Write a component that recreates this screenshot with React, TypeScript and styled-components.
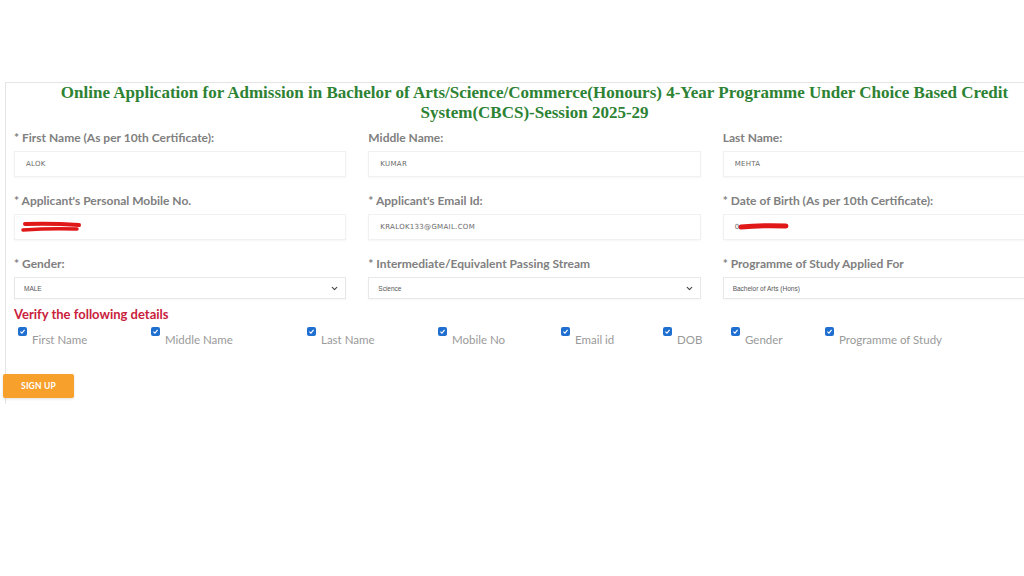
import styled, { createGlobalStyle } from 'styled-components'
import { ChevronDown } from 'lucide-react'

const GlobalStyle = createGlobalStyle`
  body {
    margin: 0;
    background: #fff;
    font-family: 'Lato', 'Open Sans', sans-serif;
  }
  * { box-sizing: border-box; }
`

const Page = styled.div`
  width: 1024px;
  height: 576px;
  overflow: hidden;
  padding: 82px 0 0 5px;
`

const Card = styled.section`
  width: 1058px;
  border: 1px solid #e4e4e4;
  border-right: none;
  border-bottom: none;
  padding: 0 8px 6px;
`

const Title = styled.h2`
  margin: 0 0 7px;
  font-family: 'Liberation Serif', 'Times New Roman', serif;
  font-weight: 700;
  font-size: 17px;
  line-height: 20px;
  color: #2d8233;
  text-align: center;
`

const Grid = styled.div`
  display: grid;
  grid-template-columns: repeat(3, 1fr);
  column-gap: 22px;
`

const Field = styled.div<{ $gap?: number }>`
  display: flex;
  flex-direction: column;
  margin-bottom: ${p => p.$gap ?? 16}px;
`

const Label = styled.label`
  font-size: 12px;
  line-height: 16px;
  font-weight: 700;
  color: #808080;
  margin-bottom: 5px;
`

const Input = styled.div`
  position: relative;
  height: 26px;
  display: flex;
  align-items: center;
  padding: 0 11px;
  border: 1px solid #f1f1f1;
  box-shadow: 0 1px 2px rgba(0, 0, 0, 0.04);
  font-family: 'DejaVu Sans', sans-serif;
  font-size: 7px;
  letter-spacing: 0.3px;
  color: #6a6a6a;
`

const Select = styled(Input)`
  height: 22px;
  padding: 0 6px 0 9px;
  justify-content: space-between;
  border-color: #e8e8e8;
  font-family: 'Liberation Sans', sans-serif;
  font-size: 6.5px;
  letter-spacing: 0;
  color: #555;
`

const Scribble = styled.svg`
  position: absolute;
  left: 6px;
  top: 5px;
`

const VerifyTitle = styled.h3`
  margin: 0 0 4px;
  font-size: 13px;
  line-height: 18px;
  font-weight: 700;
  color: #c9213b;
`

const CheckRow = styled.div`
  display: flex;
  align-items: flex-start;
  padding-left: 4px;
  height: 46px;
`

const CheckItem = styled.div<{ $w?: number }>`
  display: flex;
  align-items: flex-start;
  gap: 5px;
  width: ${p => (p.$w ? `${p.$w}px` : 'auto')};
`

const Box = styled.span`
  width: 9px;
  height: 9px;
  border-radius: 2px;
  background: #1f6fd1;
  display: flex;
  align-items: center;
  justify-content: center;
`

const CheckText = styled.span`
  padding-top: 6px;
  font-size: 11.5px;
  line-height: 14px;
  color: #9a9a9a;
`

const SignUp = styled.button`
  margin-left: -11px;
  width: 71px;
  height: 24px;
  border: none;
  border-radius: 2px;
  background: #f7a02c;
  box-shadow: 0 1px 3px rgba(0, 0, 0, 0.12);
  color: #fff;
  font-family: 'Lato', sans-serif;
  font-size: 8.5px;
  font-weight: 700;
  letter-spacing: 0.2px;
`

const Check = () => (
  <Box>
    <svg width="7" height="7" viewBox="0 0 10 10">
      <path d="M2 5.2 L4.2 7.3 L8 2.8" stroke="#fff" strokeWidth="1.6" fill="none" />
    </svg>
  </Box>
)

const checks: [string, number?][] = [
  ['First Name', 133],
  ['Middle Name', 156],
  ['Last Name', 131],
  ['Mobile No', 123],
  ['Email id', 102],
  ['DOB', 68],
  ['Gender', 94],
  ['Programme of Study'],
]

const App = () => {
  return (
    <Page>
      <GlobalStyle />
      <Card>
        <Title>
          Online Application for Admission in Bachelor of Arts/Science/Commerce(Honours) 4-Year Programme Under Choice Based Credit
          System(CBCS)-Session 2025-29
        </Title>
        <Grid>
          <Field>
            <Label>* First Name (As per 10th Certificate):</Label>
            <Input>ALOK</Input>
          </Field>
          <Field>
            <Label>Middle Name:</Label>
            <Input>KUMAR</Input>
          </Field>
          <Field>
            <Label>Last Name:</Label>
            <Input>MEHTA</Input>
          </Field>

          <Field>
            <Label>* Applicant's Personal Mobile No.</Label>
            <Input>
              <Scribble width="70" height="16" viewBox="0 0 70 16">
                <path d="M4 4 Q30 3 58 5" stroke="#e01818" strokeWidth="4" strokeLinecap="round" fill="none" />
                <path d="M2 10 Q30 8 56 9" stroke="#e01818" strokeWidth="3.5" strokeLinecap="round" fill="none" />
              </Scribble>
            </Input>
          </Field>
          <Field>
            <Label>* Applicant's Email Id:</Label>
            <Input>KRALOK133@GMAIL.COM</Input>
          </Field>
          <Field>
            <Label>* Date of Birth (As per 10th Certificate):</Label>
            <Input>
              0
              <Scribble width="60" height="12" viewBox="0 0 60 12" style={{ left: '14px', top: '6px' }}>
                <path d="M3 6 Q25 4 48 5" stroke="#e01818" strokeWidth="5" strokeLinecap="round" fill="none" />
              </Scribble>
            </Input>
          </Field>

          <Field $gap={6}>
            <Label>* Gender:</Label>
            <Select>
              MALE
              <ChevronDown size={9} strokeWidth={3} color="#444" />
            </Select>
          </Field>
          <Field $gap={6}>
            <Label>* Intermediate/Equivalent Passing Stream</Label>
            <Select>
              Science
              <ChevronDown size={9} strokeWidth={3} color="#444" />
            </Select>
          </Field>
          <Field $gap={6}>
            <Label>* Programme of Study Applied For</Label>
            <Select>
              Bachelor of Arts (Hons)
              <ChevronDown size={9} strokeWidth={3} color="#444" />
            </Select>
          </Field>
        </Grid>

        <VerifyTitle>Verify the following details</VerifyTitle>
        <CheckRow>
          {checks.map(([name, w]) => (
            <CheckItem key={name} $w={w}>
              <Check />
              <CheckText>{name}</CheckText>
            </CheckItem>
          ))}
        </CheckRow>
        <SignUp>SIGN UP</SignUp>
      </Card>
    </Page>
  )
}

export default App
